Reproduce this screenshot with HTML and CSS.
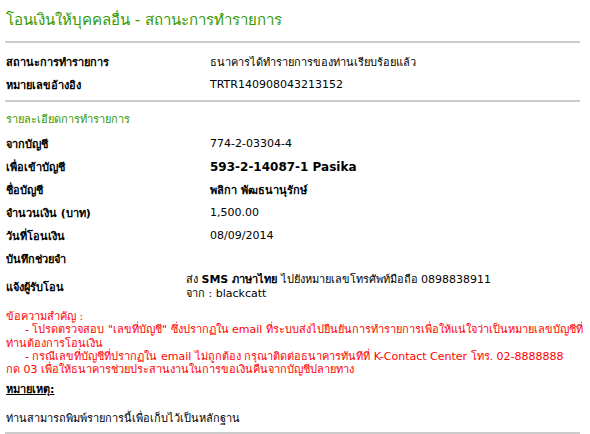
FILE: index.html
```html
<!DOCTYPE html>
<html lang="th">
<head>
    <meta charset="UTF-8">
    <title>โอนเงินให้บุคคลอื่น - สถานะการทำรายการ</title>
    <link rel="stylesheet" href="styles.css">
</head>
<body>
    <div class="page">
        <h1 class="title">โอนเงินให้บุคคลอื่น - สถานะการทำรายการ</h1>
        <hr class="rule">

        <div class="info status">
            <div class="label">สถานะการทำรายการ</div>
            <div class="value">ธนาคารได้ทำรายการของท่านเรียบร้อยแล้ว</div>
            <div class="label">หมายเลขอ้างอิง</div>
            <div class="value">TRTR140908043213152</div>
        </div>
        <hr class="rule">

        <div class="section-title">รายละเอียดการทำรายการ</div>
        <div class="info">
            <div class="label">จากบัญชี</div>
            <div class="value">774-2-03304-4</div>
            <div class="label">เพื่อเข้าบัญชี</div>
            <div class="value big">593-2-14087-1 Pasika</div>
            <div class="label">ชื่อบัญชี</div>
            <div class="value"><b>พลิกา พัฒธนานุรักษ์</b></div>
            <div class="label">จำนวนเงิน (บาท)</div>
            <div class="value">1,500.00</div>
            <div class="label">วันที่โอนเงิน</div>
            <div class="value">08/09/2014</div>
            <div class="label">บันทึกช่วยจำ</div>
            <div class="value"></div>
        </div>

        <div class="notify">
            <div class="notify-label">แจ้งผู้รับโอน</div>
            <div class="notify-value">
                ส่ง <b>SMS ภาษาไทย</b> ไปยังหมายเลขโทรศัพท์มือถือ 0898838911<br>
                จาก : blackcatt
            </div>
        </div>

        <div class="warning">
            ข้อความสำคัญ :<br>
            <span class="indent">- โปรดตรวจสอบ "เลขที่บัญชี" ซึ่งปรากฏใน email ที่ระบบส่งไปยืนยันการทำรายการเพื่อให้แน่ใจว่าเป็นหมายเลขบัญชีที่</span><br>
            ท่านต้องการโอนเงิน<br>
            <span class="indent">- กรณีเลขที่บัญชีที่ปรากฏใน email ไม่ถูกต้อง กรุณาติดต่อธนาคารทันทีที่ K-Contact Center โทร. 02-8888888</span><br>
            กด 03 เพื่อให้ธนาคารช่วยประสานงานในการขอเงินคืนจากบัญชีปลายทาง
        </div>

        <div class="remark">หมายเหตุ:</div>
        <p class="remark-text">ท่านสามารถพิมพ์รายการนี้เพื่อเก็บไว้เป็นหลักฐาน</p>
        <hr class="rule">
    </div>
</body>
</html>
```

FILE: styles.css
```css
* {
    margin: 0;
    padding: 0;
    box-sizing: border-box;
}

body {
    font-family: "DejaVu Sans", Verdana, Tahoma, sans-serif;
    font-size: 11px;
    color: #000;
    background: #fff;
    overflow: hidden;
}

.page {
    width: 590px;
    padding: 0 0 0 5px;
}

.title {
    font-size: 15px;
    font-weight: normal;
    color: #339900;
    padding: 8px 0 0 1px;
    height: 41px;
    line-height: 24px;
}

.rule {
    border: none;
    height: 2px;
    background: #cccccc;
    width: 575px;
}

/* two-column label / value rows */
.info {
    display: grid;
    grid-template-columns: 204px 1fr;
    grid-auto-rows: 23px;
    align-items: center;
    padding-left: 1px;
}

.info.status {
    padding-top: 7px;
    padding-bottom: 4px;
}

.label {
    font-weight: bold;
}

.value.big {
    font-weight: bold;
    font-size: 12px;
}

.section-title {
    color: #339900;
    padding: 11px 0 0 1px;
    height: 30px;
    line-height: 14px;
}

.notify {
    display: flex;
    align-items: center;
    padding-left: 1px;
    height: 34px;
}

.notify-label {
    font-weight: bold;
    width: 180px;
}

.notify-value {
    line-height: 14px;
}

.warning {
    color: #ff0000;
    white-space: nowrap;
    line-height: 13.25px;
    padding: 6px 0 0 1px;
}

.indent {
    padding-left: 19px;
}

.remark {
    font-weight: bold;
    text-decoration: underline;
    padding: 7px 0 0 1px;
    line-height: 14px;
}

.remark-text {
    padding: 15px 0 6px 1px;
    line-height: 14px;
}
```
